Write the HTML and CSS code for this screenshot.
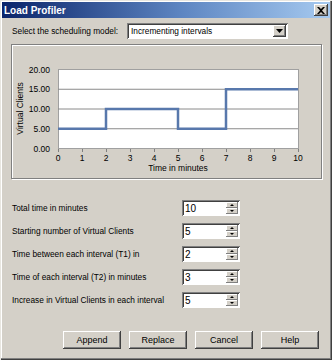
FILE: index.html
```html
<!DOCTYPE html>
<html>
<head>
<meta charset="utf-8">
<link rel="stylesheet" href="styles.css">
</head>
<body>
<div class="window">
  <div class="titlebar">
    <span class="title">Load Profiler</span>
    <span class="close">
      <svg width="8" height="7" viewBox="0 0 8 7"><path d="M0 0 L2 0 L4 2 L6 0 L8 0 L5 3.5 L8 7 L6 7 L4 5 L2 7 L0 7 L3 3.5 Z" fill="#000"/></svg>
    </span>
  </div>
  <div class="content">
    <div class="model-row">
      <span class="label">Select the scheduling model:</span>
      <div class="select">
        <span class="select-text">Incrementing intervals</span>
        <span class="select-btn"><svg width="7" height="4" viewBox="0 0 7 4"><path d="M0 0 H7 L3.5 4 Z" fill="#000"/></svg></span>
      </div>
    </div>
    <div class="group">
      <svg class="chart" width="309" height="133" viewBox="0 0 309 133">
        <rect x="46.5" y="24.5" width="240" height="79" fill="#fff" stroke="#a0a0a0"/>
        <g stroke="#8a8a8a" stroke-width="1">
          <line x1="46" y1="44.25" x2="286" y2="44.25"/>
          <line x1="46" y1="64" x2="286" y2="64"/>
          <line x1="46" y1="83.75" x2="286" y2="83.75"/>
        </g>
        <g stroke="#808080" stroke-width="1">
          <line x1="46.5" y1="104" x2="46.5" y2="107"/>
          <line x1="70.5" y1="104" x2="70.5" y2="107"/>
          <line x1="94.5" y1="104" x2="94.5" y2="107"/>
          <line x1="118.5" y1="104" x2="118.5" y2="107"/>
          <line x1="142.5" y1="104" x2="142.5" y2="107"/>
          <line x1="166.5" y1="104" x2="166.5" y2="107"/>
          <line x1="190.5" y1="104" x2="190.5" y2="107"/>
          <line x1="214.5" y1="104" x2="214.5" y2="107"/>
          <line x1="238.5" y1="104" x2="238.5" y2="107"/>
          <line x1="262.5" y1="104" x2="262.5" y2="107"/>
          <line x1="286.5" y1="104" x2="286.5" y2="107"/>
        </g>
        <polyline points="46,83.75 94,83.75 94,64 166,64 166,83.75 214,83.75 214,44.25 286,44.25" fill="none" stroke="#5878ac" stroke-width="2.5"/>
        <g class="axis" text-anchor="end">
          <text x="38" y="27.5">20.00</text>
          <text x="38" y="47">15.00</text>
          <text x="38" y="67">10.00</text>
          <text x="38" y="87">5.00</text>
          <text x="38" y="106.5">0.00</text>
        </g>
        <g class="axis" text-anchor="middle">
          <text x="46" y="116">0</text>
          <text x="70" y="116">1</text>
          <text x="94" y="116">2</text>
          <text x="118" y="116">3</text>
          <text x="142" y="116">4</text>
          <text x="166" y="116">5</text>
          <text x="190" y="116">6</text>
          <text x="214" y="116">7</text>
          <text x="238" y="116">8</text>
          <text x="262" y="116">9</text>
          <text x="286" y="116">10</text>
          <text x="166" y="126">Time in minutes</text>
          <text transform="translate(11 63.5) rotate(-90)">Virtual Clients</text>
        </g>
      </svg>
    </div>
    <div class="form">
      <span class="label">Total time in minutes</span>
      <div class="spin"><span class="spin-val">10</span><span class="spin-btns"><span class="sb up"></span><span class="sb down"></span></span></div>
      <span class="label">Starting number of Virtual Clients</span>
      <div class="spin"><span class="spin-val">5</span><span class="spin-btns"><span class="sb up"></span><span class="sb down"></span></span></div>
      <span class="label">Time between each interval (T1) in</span>
      <div class="spin"><span class="spin-val">2</span><span class="spin-btns"><span class="sb up"></span><span class="sb down"></span></span></div>
      <span class="label">Time of each interval (T2) in minutes</span>
      <div class="spin"><span class="spin-val">3</span><span class="spin-btns"><span class="sb up"></span><span class="sb down"></span></span></div>
      <span class="label">Increase in Virtual Clients in each interval</span>
      <div class="spin"><span class="spin-val">5</span><span class="spin-btns"><span class="sb up"></span><span class="sb down"></span></span></div>
    </div>
    <div class="buttons">
      <button class="btn">Append</button>
      <button class="btn">Replace</button>
      <button class="btn">Cancel</button>
      <button class="btn">Help</button>
    </div>
  </div>
</div>
</body>
</html>
```
FILE: styles.css
```css
* { box-sizing: border-box; }
html, body { margin: 0; padding: 0; background: #d4d0c8; }
body { font-family: "Liberation Sans", Arial, sans-serif; font-size: 8.3px; color: #000; }
.window {
  width: 332px; height: 360px;
  background: #d4d0c8;
  padding: 2px;
  box-shadow: inset 1px 1px 0 #e8e6e0, inset -1px -1px 0 #404040, inset -2px -2px 0 #808080, inset 2px 2px 0 #fff;
  display: flex; flex-direction: column;
}
.titlebar {
  height: 16px;
  background: linear-gradient(to right, #0a246a, #5e86c2 55%, #a6caf0);
  display: flex; align-items: center; justify-content: space-between;
  padding: 0 2px 0 2px;
}
.title { color: #fff; font-weight: bold; font-size: 10px; }
.close {
  width: 14px; height: 12px; background: #d4d0c8;
  display: flex; align-items: center; justify-content: center;
  box-shadow: inset -1px -1px 0 #404040, inset 1px 1px 0 #fff, inset -2px -2px 0 #808080;
}
.content { padding: 5px 7px 0 9px; display: flex; flex-direction: column; }
.label { white-space: nowrap; }
.model-row { display: flex; align-items: center; height: 16px; }
.model-row .label { width: 116px; padding-left: 1px; }
.select {
  width: 161px; height: 16px; background: #fff;
  display: flex; align-items: center; justify-content: space-between;
  box-shadow: inset 1px 1px 0 #808080, inset -1px -1px 0 #fff, inset 2px 2px 0 #404040;
  padding: 2px;
}
.select-text { padding-left: 2px; white-space: nowrap; }
.select-btn {
  width: 13px; height: 12px; background: #d4d0c8;
  display: flex; align-items: center; justify-content: center;
  box-shadow: inset -1px -1px 0 #404040, inset 1px 1px 0 #fff, inset -2px -2px 0 #808080;
}
.group {
  margin-top: 5px;
  width: 311px; height: 135px;
  border: 1px solid #808080;
  box-shadow: 1px 1px 0 #fff, inset 1px 1px 0 #fff;
}
.chart { display: block; }
.axis text { font-family: "Liberation Sans", Arial, sans-serif; font-size: 8.5px; fill: #000; }
.form {
  margin-top: 21px;
  display: grid; grid-template-columns: 171px 58px; row-gap: 7px;
  align-items: center;
}
.form .label { padding-left: 1px; }
.spin {
  height: 16px; background: #fff;
  display: flex; align-items: center; justify-content: space-between;
  box-shadow: inset 1px 1px 0 #808080, inset -1px -1px 0 #fff, inset 2px 2px 0 #404040;
  padding: 2px 2px 2px 3px;
}
.spin-val { font-size: 10px; }
.spin-btns { display: flex; flex-direction: column; width: 12px; height: 12px; }
.sb {
  flex: 1; background: #d4d0c8; position: relative;
  box-shadow: inset -1px -1px 0 #808080, inset 1px 1px 0 #fff;
}
.sb::after {
  content: ""; position: absolute; left: 4px; width: 0; height: 0;
  border-left: 2px solid transparent; border-right: 2px solid transparent;
}
.up::after { top: 2px; border-bottom: 2px solid #000; }
.down::after { top: 2px; border-top: 2px solid #000; }
.buttons {
  margin-top: 23px; margin-left: 52px;
  display: flex; gap: 8px;
}
.btn {
  width: 58px; height: 18px; padding: 0; margin: 0;
  font-family: "Liberation Sans", Arial, sans-serif; font-size: 9px; color: #000;
  background: #d4d0c8; border: none;
  box-shadow: inset -1px -1px 0 #404040, inset 1px 1px 0 #fff, inset -2px -2px 0 #808080;
}
```
